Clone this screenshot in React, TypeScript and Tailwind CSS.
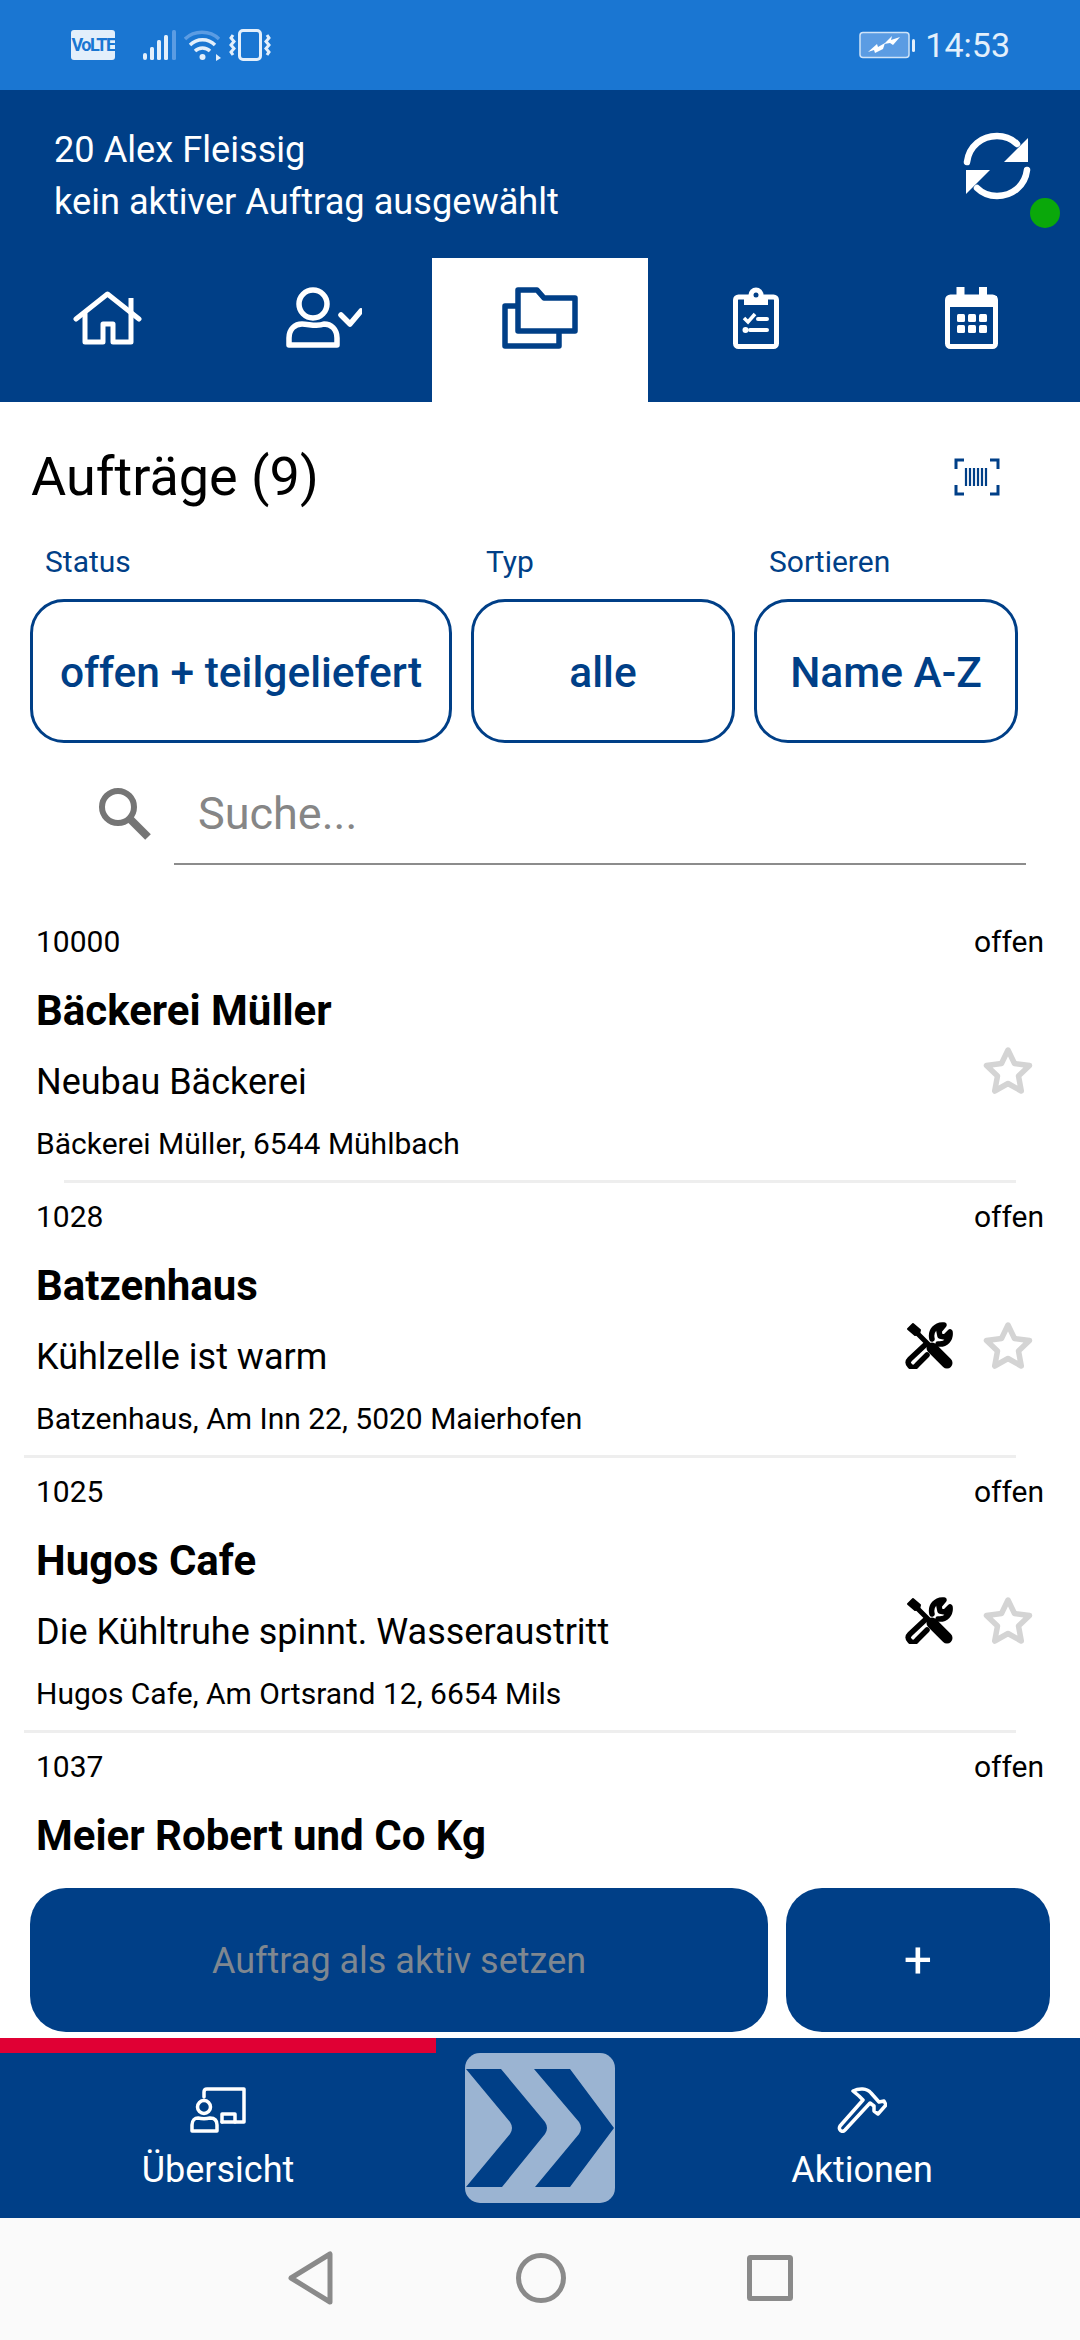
import React from "react";

const BLUE = "#003f87";

function VoLTE() {
  return (
    <div className="w-[44px] h-[30px] bg-[#e3effb] rounded-[3px] flex items-center justify-center text-[#1a76d2] text-[18px] font-bold tracking-[-1.5px] leading-none">
      VoLTE
    </div>
  );
}

function Signal() {
  return (
    <svg width="34" height="30" viewBox="0 0 34 30" fill="none">
      <rect x="0" y="23" width="4" height="7" rx="2" fill="#e3effb" />
      <rect x="7" y="17" width="4" height="13" rx="1.5" fill="#e3effb" />
      <rect x="14" y="10" width="4" height="20" rx="1.5" fill="#e3effb" />
      <rect x="21" y="5" width="4" height="25" rx="1.5" fill="#e3effb" />
      <rect x="29" y="0" width="4" height="30" rx="1.5" fill="#5b9ce3" />
    </svg>
  );
}

function Wifi() {
  return (
    <svg width="38" height="32" viewBox="0 0 38 32" fill="none" stroke="#e3effb" strokeWidth="3.4">
      <path d="M1 10C10 1 26 1 35 10" stroke="#5b9ce3" />
      <path d="M6 16C13 9 24 9 31 16" />
      <path d="M11 22C15 18 22 18 26 22" />
      <circle cx="18.5" cy="28" r="3" fill="#e3effb" stroke="none" />
      <path d="M32 25l5 4-5 3z" fill="#e3effb" stroke="none" />
    </svg>
  );
}

function Vibrate() {
  return (
    <svg width="42" height="32" viewBox="0 0 42 32" fill="none" stroke="#e3effb" strokeWidth="3">
      <rect x="10.500" y="1.500" width="21" height="29" rx="3.500" />
      <path d="M4 6L2 9l3 3.500L2 16l3 3.500L2 23l2 3" />
      <path d="M38 6l2 3-3 3.500 3 3.500-3 3.500 3 3.500-2 3" />
    </svg>
  );
}

function Battery() {
  return (
    <svg width="56" height="28" viewBox="0 0 56 28" fill="none">
      <rect x="1" y="1.500" width="49" height="25" rx="3" fill="#5b9ce3" stroke="#cfe3f8" strokeWidth="1.500" />
      <rect x="53" y="8" width="3" height="13" rx="1.500" fill="#e3effb" />
      <path d="M9 21l9-8 1 3 7-4-2 6-8 4-1-3z" fill="#fff" />
      <path d="M25 13l8-8-1 4 9-3-7 8-3-2z" fill="#fff" />
    </svg>
  );
}

function SyncIcon() {
  return (
    <svg width="68" height="68" viewBox="0 0 68 68" fill="none">
      <path d="M4 30C6 14 19 4 34 4c8 0 15 3 20 8" stroke="#fff" strokeWidth="6.500" strokeLinecap="round" />
      <path d="M64 38C62 54 49 64 34 64c-8 0-15-3-20-8" stroke="#fff" strokeWidth="6.500" strokeLinecap="round" />
      <path d="M65 6v24H41z" fill="#fff" />
      <path d="M3 62V38h24z" fill="#fff" />
    </svg>
  );
}

function HomeIcon() {
  return (
    <svg width="70" height="54" viewBox="0 0 70 54" fill="none" stroke="#fff" strokeWidth="5" strokeLinecap="round" strokeLinejoin="round">
      <path d="M3 28L34.500 3 66 28" />
      <path d="M58 7v14" strokeLinecap="butt" />
      <path d="M12 23v28h18V33h10v18h18V22" />
    </svg>
  );
}

function UserCheckIcon() {
  return (
    <svg width="76" height="62" viewBox="0 0 76 62" fill="none" stroke="#fff" strokeWidth="5.500" strokeLinecap="round" strokeLinejoin="round">
      <circle cx="27" cy="17" r="14" />
      <path d="M3 58v-7c0-9 6-14 13-14 7 0 15 3 22 0 7 0 13 5 13 14v7z" />
      <path d="M55 28l9 9 11-13" />
    </svg>
  );
}

function FolderIcon() {
  return (
    <svg width="76" height="62" viewBox="0 0 76 62" fill="none" stroke={BLUE} strokeWidth="5.500" strokeLinejoin="round">
      <path d="M16 3h19l7 8h31v33H16z" />
      <path d="M16 19H3v40h54V44" />
    </svg>
  );
}

function ClipboardIcon() {
  return (
    <svg width="46" height="62" viewBox="0 0 46 62" fill="none">
      <rect x="2.500" y="10" width="41" height="49.500" rx="3" stroke="#fff" strokeWidth="5" />
      <path d="M11 8h24v10H11z" fill="#fff" />
      <circle cx="23" cy="8" r="7.500" fill="#fff" />
      <circle cx="23" cy="8" r="2.500" fill={BLUE} />
      <path d="M11 31l4 4 7-8" stroke="#fff" strokeWidth="3.500" />
      <path d="M25 32h9M17 43h17" stroke="#fff" strokeWidth="4" strokeLinecap="round" />
      <circle cx="12.500" cy="43" r="3" fill="#fff" />
    </svg>
  );
}

function CalendarIcon() {
  return (
    <svg width="54" height="62" viewBox="0 0 54 62" fill="none">
      <rect x="2.500" y="10" width="48" height="49.500" rx="3" stroke="#fff" strokeWidth="5" />
      <rect x="2" y="9" width="50" height="11" fill="#fff" />
      <rect x="11.500" y="0" width="8" height="12" fill="#fff" />
      <rect x="34" y="0" width="8" height="12" fill="#fff" />
      {[12, 23, 34].map((x) => (
        <React.Fragment key={x}>
          <rect x={x} y="27" width="8" height="8" rx="1.500" fill="#fff" />
          <rect x={x} y="38" width="8" height="8" rx="1.500" fill="#fff" />
        </React.Fragment>
      ))}
    </svg>
  );
}

function BarcodeIcon() {
  return (
    <svg width="46" height="38" viewBox="0 0 46 38" fill="none" stroke={BLUE}>
      <path d="M10 2H2v9M36 2h8v9M10 36H2v-9M36 36h8v-9" strokeWidth="3" />
      <path d="M12 10v18M16 10v18M20 10v18M24 10v18M28 10v18M32 10v18" strokeWidth="2.200" />
    </svg>
  );
}

function SearchIcon() {
  return (
    <svg width="54" height="54" viewBox="0 0 54 54" fill="none" stroke="#757575">
      <circle cx="20" cy="20" r="16" strokeWidth="6" />
      <path d="M31 31l19 19" strokeWidth="8" />
    </svg>
  );
}

function StarIcon() {
  return (
    <svg width="50" height="48" viewBox="0 0 50 48" fill="none" stroke="#d4d4d4" strokeWidth="5.500" strokeLinejoin="round">
      <path d="M25 4l6.500 13.500 15 2-11 10.500 2.800 15L25 37.500 11.700 45l2.800-15-11-10.500 15-2z" />
    </svg>
  );
}

function ToolsIcon() {
  return (
    <svg width="48" height="48" viewBox="0 0 48 48" fill="none" stroke="#000" strokeLinecap="round" strokeLinejoin="round">
      <path d="M27 18C25 10 31 3 39 4l-5 6 1 5 5 1 5-5c1 7-4 13-12 12" strokeWidth="5.500" />
      <path d="M20 24L5 38c-3 3-2 5 0 7s5 2 7-1l10-10" strokeWidth="5.500" />
      <path d="M3 8l5-5 7 6-1 4-4 1z" fill="#000" strokeWidth="2" />
      <path d="M10 10l17 17" strokeWidth="5" />
      <path d="M27 27l15 15" strokeWidth="11" />
    </svg>
  );
}

function OverviewIcon() {
  return (
    <svg width="56" height="46" viewBox="0 0 56 46" fill="none" stroke="#fff" strokeWidth="3.500" strokeLinejoin="round" strokeLinecap="round">
      <path d="M14 10V5q0-3 3-3h37v33H32" />
      <path d="M32 35v-8h13v8" />
      <circle cx="14" cy="20" r="6.500" />
      <path d="M2 44v-6c0-5 3-7 6-7 4 1 8 1 12 0 4 0 7 2 7 7v6z" />
    </svg>
  );
}

function HammerIcon() {
  return (
    <svg width="50" height="46" viewBox="0 0 50 46" fill="none" stroke="#fff" strokeWidth="3.500" strokeLinejoin="round">
      <path d="M16 4C22 1 30 1 34 6l8 9 5-1 2 4-8 9-4-3v-5l-4-3L8 43c-3 3-7 0-5-4L26 13l-4-4z" />
    </svg>
  );
}

function Logo() {
  return (
    <svg width="150" height="150" viewBox="0 0 150 150">
      <rect width="150" height="150" rx="15" fill="#9bb4d2" />
      <path d="M1 16h35l44 53q4 6 0 12L37 134H1l44-53q4-6 0-12z" fill={BLUE} />
      <path d="M69 16h36l44 59-44 59H70l44-53q4-6 0-12z" fill={BLUE} />
    </svg>
  );
}

type Order = { no: string; name: string; desc: string; addr: string; tools: boolean };

const orders: Order[] = [
  { no: "10000", name: "Bäckerei Müller", desc: "Neubau Bäckerei", addr: "Bäckerei Müller, 6544 Mühlbach", tools: false },
  { no: "1028", name: "Batzenhaus", desc: "Kühlzelle ist warm", addr: "Batzenhaus, Am Inn 22, 5020 Maierhofen", tools: true },
  { no: "1025", name: "Hugos Cafe", desc: "Die Kühltruhe spinnt. Wasseraustritt", addr: "Hugos Cafe, Am Ortsrand 12, 6654 Mils", tools: true },
];

function Row({ o }: { o: Order }) {
  return (
    <div className="h-[272px] px-[36px] pt-[17px]">
      <div className="flex justify-between text-[30px] leading-[34px] text-black">
        <span>{o.no}</span>
        <span>offen</span>
      </div>
      <div className="flex items-center justify-between">
        <div>
          <div className="text-[42px] leading-[44px] font-bold mt-[30px] text-black">{o.name}</div>
          <div className="text-[36px] leading-[40px] mt-[29px] text-black">{o.desc}</div>
          <div className="text-[30px] leading-[34px] mt-[25px] text-black">{o.addr}</div>
        </div>
        <div className="flex items-center gap-[30px] mr-[11px] mt-[20px]">
          {o.tools && <ToolsIcon />}
          <StarIcon />
        </div>
      </div>
    </div>
  );
}

export default function App() {
  return (
    <div className="w-[1080px] h-[2340px] flex flex-col bg-white overflow-hidden font-['Roboto',sans-serif]">
      <div className="h-[90px] shrink-0 bg-[#1a76d2] flex items-center justify-between pl-[71px] pr-[70px]">
        <div className="flex items-center">
          <VoLTE />
          <div className="ml-[28px] flex items-center gap-[7px]">
            <Signal />
            <Wifi />
            <Vibrate />
          </div>
        </div>
        <div className="flex items-center gap-[10px]">
          <Battery />
          <span className="text-[34px] text-[#e3effb] leading-none">14:53</span>
        </div>
      </div>

      <div className="h-[168px] shrink-0 bg-[#003f87] relative pl-[54px] pt-[34px] text-white text-[36.200px] leading-[52px]">
        <div>20 Alex Fleissig</div>
        <div>kein aktiver Auftrag ausgewählt</div>
        <div className="absolute right-[49px] top-[42px]">
          <SyncIcon />
        </div>
        <div className="absolute right-[20px] top-[108px] w-[30px] h-[30px] rounded-full bg-[#0aa80a]" />
      </div>

      <div className="h-[144px] shrink-0 bg-[#003f87] grid grid-cols-5">
        {[<HomeIcon />, <UserCheckIcon />, <FolderIcon />, <ClipboardIcon />, <CalendarIcon />].map((icon, i) => (
          <div
            key={i}
            className={
              i === 0
                ? "flex items-start justify-center pt-[33px]"
                : i === 2
                  ? "bg-white flex items-start justify-center pt-[29px]"
                  : "flex items-start justify-center pt-[29px]"
            }
          >
            {icon}
          </div>
        ))}
      </div>

      <div className="h-[150px] shrink-0 flex items-center justify-between pl-[31px] pr-[80px]">
        <span className="text-[54px] leading-[60px] text-black">Aufträge (9)</span>
        <BarcodeIcon />
      </div>

      <div className="shrink-0 flex gap-[19px] pl-[30px] text-[#003f87]">
        {[
          { l: "Status", v: "offen + teilgeliefert", w: "w-[422px]" },
          { l: "Typ", v: "alle", w: "w-[264px]" },
          { l: "Sortieren", v: "Name A-Z", w: "w-[264px]" },
        ].map((f) => (
          <div key={f.l} className={f.w}>
            <div className="pl-[15px] text-[30px] leading-[40px] mt-[-10px]">{f.l}</div>
            <div className="mt-[17px] h-[144px] pt-[3px] rounded-[34px] border-[3px] border-[#003f87] flex items-center justify-center text-[42.5px] font-medium">
              {f.v}
            </div>
          </div>
        ))}
      </div>

      <div className="shrink-0 flex items-start mt-[38px] pl-[98px]">
        <div className="pt-[6px]">
          <SearchIcon />
        </div>
        <div className="ml-[22px] w-[852px] h-[84px] border-b-2 border-[#8c8c8c] pl-[24px] text-[45px] leading-[66px] text-[#868686]">
          Suche...
        </div>
      </div>

      <div className="flex-1 min-h-0 relative overflow-hidden">
        <div className="pt-[43px]">
          {orders.map((o, i) => (
            <React.Fragment key={o.no}>
              <Row o={o} />
              <div className={i === 0 ? "ml-[64px] mr-[64px] h-[3px] bg-[#eeeeee]" : "ml-[24px] mr-[64px] h-[3px] bg-[#eeeeee]"} />
            </React.Fragment>
          ))}
          <div className="px-[36px] pt-[17px]">
            <div className="flex justify-between text-[30px] leading-[34px] text-black">
              <span>1037</span>
              <span>offen</span>
            </div>
            <div className="text-[42px] leading-[44px] font-bold mt-[30px] text-black">Meier Robert und Co Kg</div>
          </div>
        </div>
      </div>

      <div className="shrink-0 h-[150px] flex gap-[18px] px-[30px]">
        <div className="w-[738px] h-[144px] pt-[2px] bg-[#003f87] rounded-[36px] flex items-center justify-center text-[36px] text-[#7f8790]">
          Auftrag als aktiv setzen
        </div>
        <div className="w-[264px] h-[144px] bg-[#003f87] rounded-[36px] flex items-center justify-center text-[50px] text-white font-normal">
          +
        </div>
      </div>

      <div className="h-[180px] shrink-0 bg-[#003f87] relative grid grid-cols-[436px_208px_436px]">
        <div className="absolute left-0 top-0 w-[436px] h-[15px] bg-[#e00034]" />
        <div className="flex flex-col items-center pt-[49px] text-white text-[36px] leading-[40px]">
          <OverviewIcon />
          <span className="mt-[17px]">Übersicht</span>
        </div>
        <div className="flex items-center justify-center">
          <Logo />
        </div>
        <div className="flex flex-col items-center pt-[49px] text-white text-[36px] leading-[40px]">
          <HammerIcon />
          <span className="mt-[17px]">Aktionen</span>
        </div>
      </div>

      <div className="h-[122px] shrink-0 bg-[#fafafa] flex items-center justify-center gap-[181px] pb-[3px]">
        <svg width="48" height="54" viewBox="0 0 48 54" fill="none" stroke="#8a8a8a" strokeWidth="5" strokeLinejoin="round">
          <path d="M43 3v48L4 27z" />
        </svg>
        <svg width="50" height="50" viewBox="0 0 50 50" fill="none" stroke="#8a8a8a" strokeWidth="5">
          <circle cx="25" cy="25" r="22.500" />
        </svg>
        <svg width="46" height="46" viewBox="0 0 46 46" fill="none" stroke="#8a8a8a" strokeWidth="5" strokeLinejoin="round">
          <rect x="2.500" y="2.500" width="41" height="41" rx="1" />
        </svg>
      </div>
    </div>
  );
}
